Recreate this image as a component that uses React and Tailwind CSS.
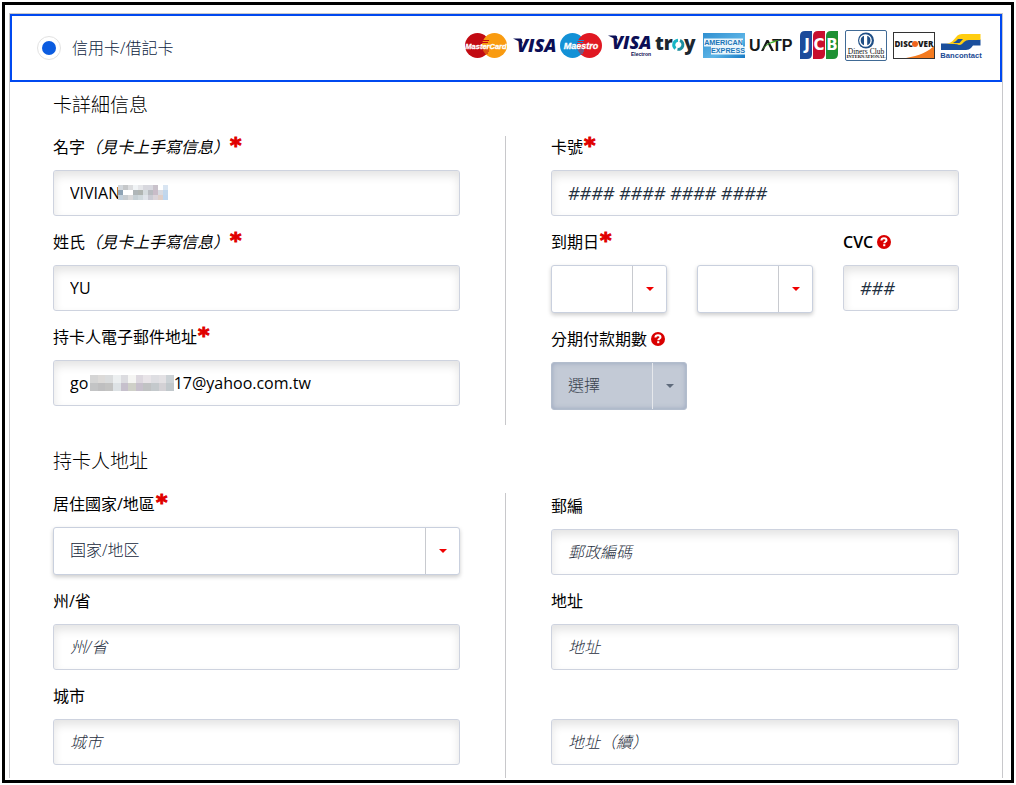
import { useId } from 'react'

const inputClass =
  'block w-full h-[46px] px-4 rounded-[3px] border border-[#ced3df] bg-white text-black placeholder:italic placeholder:text-[#1f2f40] shadow-[inset_0_5px_10px_rgba(0,0,0,0.11)] outline-none'

const Required = () => (
  <span className="ml-px self-start font-['DejaVu_Sans',sans-serif] text-[22px] leading-5 font-bold text-[#e00000] [-webkit-text-stroke:1px_#e00000]">*</span>
)

const Help = () => (
  <button type="button" aria-label="?" className="ml-1 flex items-center">
    <svg viewBox="0 0 14 14" className="w-3.5 h-3.5">
      <circle cx="7" cy="7" r="7" fill="#d90000" />
      <path d="M4.4 5.5c.1-1.500 1.100-2.200 2.600-2.200 1.500 0 2.500.8 2.500 1.900 0 1.600-2.200 1.500-2.200 3.100" fill="none" stroke="#fff" strokeWidth="2" />
      <rect x="6.2" y="9.200" width="2.100" height="2" fill="#fff" />
    </svg>
  </button>
)

const Field = ({ id, label, note, required, help, strong, children }) => (
  <div>
    <div className="flex items-center h-[22px] mb-3">
      <label htmlFor={id} className={`flex text-base leading-[22px] text-black whitespace-nowrap ${strong ? 'font-semibold' : 'font-normal'}`}>
        <span>{label}{note && <i>{note}</i>}</span>
        {required && <Required />}
      </label>
      {help && <Help />}
    </div>
    {children}
  </div>
)

const TextField = ({ label, note, required, help, strong, overlay, digits, ...props }) => {
  const id = useId()
  return (
    <Field id={id} label={label} note={note} required={required} help={help} strong={strong}>
      <div className="relative">
        <input id={id} className={`${inputClass} ${digits ? 'text-lg' : 'text-base placeholder:font-light'}`} {...props} />
        {overlay}
      </div>
    </Field>
  )
}

const Select = ({ id, disabled, option, ...props }) => (
  <div className="relative">
    <select
      id={id}
      disabled={disabled}
      className="block w-full h-12 pl-4 pr-9 pb-0.5 appearance-none rounded-[3px] border border-[#c9d0de] bg-white text-base font-light text-[#14263a] shadow-[0_2px_4px_rgba(0,0,0,0.2)] outline-none disabled:bg-[#c3cad6] disabled:border-[#b3bdcd] disabled:text-[#3a4450] disabled:opacity-100 disabled:shadow-[inset_0_0_5px_rgba(110,130,165,0.5)]"
      {...props}
    >
      <option>{option}</option>
    </select>
    <span className={`pointer-events-none absolute inset-y-px right-px w-[34px] flex items-center justify-center border-l ${disabled ? 'border-[#e6e8ec] text-[#5f6b7c]' : 'border-[#c8cacf] text-[#f00000]'}`}>
      <svg viewBox="0 0 8 4" className="w-2 h-1" fill="currentColor"><path d="M0 0h8L4 4z" /></svg>
    </span>
  </div>
)

const SelectField = ({ label, required, help, disabled, option }) => {
  const id = useId()
  return (
    <Field id={id} label={label} required={required} help={help}>
      <Select id={id} disabled={disabled} option={option} />
    </Field>
  )
}

const Mosaic = ({ rows, cell, height, className }) => (
  <svg className={className} viewBox={`0 0 ${rows[0].length * cell} ${rows.length * height}`} preserveAspectRatio="none" shapeRendering="crispEdges">
    {rows.map((row, y) => row.map((fill, x) => (
      <rect key={`${x}-${y}`} x={x * cell} y={y * height} width={cell} height={height} fill={fill} />
    )))}
  </svg>
)

const nameMosaic = [
  ['#d3d8dd', '#c5c7c9', '#dcdddf', '#f1f4f6', '#e6e7ea', '#d8d8de', '#d8d8df', '#c9c2cb', '#ffffff', '#d9e5f2'],
  ['#8ea3b5', '#ffffff', '#ffffff', '#afb6b8', '#b0b5b2', '#d5dbde', '#b9bcc1', '#c9bcc8', '#d9dbe2', '#c2d7ec'],
  ['#c2d0dc', '#c7ccd0', '#d9d9da', '#c6d0d5', '#d0d9dd', '#e0e4ea', '#cbcbd4', '#dbd4da', '#dfcfc9', '#bed6ef'],
]

const mailMosaic = [
  ['#d5d5d5', '#dcdad8', '#dadcdd', '#eceff0', '#dcdce0', '#f5f5f3', '#ddd8df', '#e8e4e8', '#dedee2', '#e3e1e4', '#ccd2d6'],
  ['#c3c4c5', '#bfbfc0', '#c3c3c2', '#dde2e5', '#c6c0cc', '#cfd0c8', '#c7c0cc', '#c0c2c3', '#c4c9cc', '#d3d1d5', '#c1c8cc'],
]

const Logo = ({ label, children }) => (
  <svg role="img" aria-label={label} viewBox="0 0 42 38" className="w-[42px] h-[38px] shrink-0 overflow-visible">
    {children}
  </svg>
)

const sans = 'Liberation Sans, sans-serif'
const heavy = 'Open Sans, sans-serif'

const Circles = ({ left, right, text, size }) => (
  <>
    <circle cx="12.5" cy="16.500" r="12.5" fill={left} />
    <circle cx="29.5" cy="16.500" r="12.5" fill={right} />
    <path d="M17 11.500h7M17 13.500h6M17 20h7M18 22h6M19 24h4" stroke={left} strokeWidth="1" />
    <text x="21" y="20" textAnchor="middle" fontFamily={sans} fontSize={size} fontWeight="700" fontStyle="italic" fill="#fff" stroke="#fff" strokeWidth="0.3">{text}</text>
  </>
)

const Logos = () => (
  <div className="flex justify-between w-[517px]">
    <Logo label="MasterCard"><Circles left="#c20a12" right="#f99b10" text="MasterCard" size="7.500" /></Logo>
    <Logo label="Visa">
      <text x="4" y="23" fontFamily={heavy} fontSize="18" fontWeight="800" fontStyle="italic" fill="#0b0e55">VISA</text>
      <path d="M0 9.500h8l2 5z" fill="#0b0e55" />
    </Logo>
    <Logo label="Maestro"><Circles left="#1391d6" right="#e01822" text="Maestro" size="9" /></Logo>
    <Logo label="Visa Electron">
      <text x="4" y="20" fontFamily={heavy} fontSize="18" fontWeight="800" fontStyle="italic" fill="#0b0e55">
        VISA
        <tspan x="23" y="27" fontFamily={sans} fontSize="5" fontStyle="normal" fontWeight="700">Electron</tspan>
      </text>
      <path d="M0 6.500h8l2 5z" fill="#0b0e55" />
    </Logo>
    <Logo label="Troy">
      <text y="21" fontFamily={heavy} fontSize="19" fontWeight="800" fill="#1c2730">
        <tspan x="0">tr</tspan><tspan x="29">y</tspan>
      </text>
      <path d="M23 11.300a4.600 4.600 0 0 0-2.500 8.200" fill="none" stroke="#16b5c4" strokeWidth="3" />
      <path d="M25 11.500a4.600 4.600 0 0 1-2.500 8.800" fill="none" stroke="#1c8fa0" strokeWidth="3" />
    </Logo>
    <Logo label="American Express">
      <defs>
        <linearGradient id="amex" x1="0" y1="0" x2="1" y2="1">
          <stop offset="0" stopColor="#2f8fd0" />
          <stop offset="0.6" stopColor="#5cb4e6" />
          <stop offset="1" stopColor="#1478c4" />
        </linearGradient>
      </defs>
      <rect y="4" width="42" height="25" fill="url(#amex)" />
      <path d="M1 9.500h39v8H1zM8 17.500h34v8H8z" fill="#e9f5fc" />
      <text textAnchor="middle" fontFamily={sans} fontSize="7.200" fontWeight="700" fill="#1b75b8">
        <tspan x="20.500" y="16.200">AMERICAN</tspan><tspan x="25" y="24.200">EXPRESS</tspan>
      </text>
    </Logo>
    <Logo label="UATP">
      <text y="22" fontFamily={sans} fontSize="16" fontWeight="700" fill="#15181a">
        <tspan x="-1">U</tspan><tspan x="22">TP</tspan>
      </text>
      <path d="M11 22l5.500-11h2L24 22h-2.600L17.400 14l-4 8z" fill="#15181a" />
      <path d="M12 21c3-5 8-9 18-10.500l-6 3c-5 1-9 4-12 7.500z" fill="#3fae29" />
    </Logo>
    <Logo label="JCB">
      <path d="M2 7q0-5 5-5h7v23q0 5-5 5H2z" fill="#1d4b9b" />
      <path d="M15 7q0-5 5-5h7v23q0 5-5 5h-7z" fill="#c8102e" />
      <path d="M28 7q0-5 5-5h7v23q0 5-5 5h-7z" fill="#1e9133" />
      <text y="21" textAnchor="middle" fontFamily="DejaVu Sans, sans-serif" fontSize="15" fontWeight="700" fill="#fff">
        <tspan x="9">J</tspan><tspan x="21">C</tspan><tspan x="34">B</tspan>
      </text>
    </Logo>
    <Logo label="Diners Club International">
      <rect x="0.500" y="1.500" width="41" height="30" rx="1.500" fill="#fff" stroke="#406a95" />
      <circle cx="21" cy="11.500" r="8" fill="#1f4f86" />
      <circle cx="20.500" cy="11.500" r="6.300" fill="#fff" />
      <path d="M19 6.800v9.400a5 5 0 0 1 0-9.400zM22.200 6.800v9.400a5 5 0 0 0 0-9.400z" fill="#1f4f86" />
      <text textAnchor="middle" fontFamily="Liberation Serif, serif" fill="#111">
        <tspan x="21" y="24.500" fontSize="7.500">Diners Club</tspan>
        <tspan x="21" y="29" fontSize="4.600" fontWeight="700">INTERNATIONAL</tspan>
      </text>
    </Logo>
    <Logo label="Discover">
      <rect x="0.500" y="3.500" width="41" height="26" fill="#fff" stroke="#333" />
      <path d="M13 29C26 27 36 22 41 17v12z" fill="#f47b20" />
      <text y="18" fontFamily={heavy} fontSize="8" fontWeight="800" fill="#1a1a1a">
        <tspan x="1.500">DISC</tspan><tspan x="25">VER</tspan>
      </text>
      <circle cx="22" cy="15" r="3" fill="#f0651e" />
    </Logo>
    <Logo label="Bancontact">
      <path d="M1 14.500h19l6-4h14.500v6H33l-2 2.500q-2 2-5 2H1z" fill="#1b4f9c" />
      <path d="M6 14.500q5 0 8-4l3.500-4Q19 5 22 5h18.500v6H29q-3 0-5 2l-2 2q-1 1-3 1-3-1.500-13-1.500z" fill="#ffcd10" />
      <path d="M13 14q3-1.500 5-4h5l-3.500 4z" fill="#1b4f9c" />
      <text x="21" y="28.500" textAnchor="middle" fontFamily={sans} fontSize="7.600" fontWeight="700" fill="#1b4a94">Bancontact</text>
    </Logo>
  </div>
)

const Heading = ({ children, className }) => (
  <h2 className={`text-[19px] leading-7 font-light text-black ${className}`}>{children}</h2>
)

const Left = ({ children, className }) => (
  <div className={`flex flex-col gap-[15px] pr-[45px] border-r border-[#c8c8cb] ${className}`}>{children}</div>
)

const Right = ({ children, className }) => (
  <div className={`flex flex-col justify-end gap-[15px] pl-[45px] ${className}`}>{children}</div>
)

const ExpiryFields = () => {
  const id = useId()
  return (
    <div className="grid grid-cols-3 gap-x-[30px]">
      <div className="col-span-2">
        <Field id={id} label="到期日" required>
          <div className="grid grid-cols-2 gap-x-[30px]">
            <Select id={id} option="" />
            <Select aria-label="到期日" option="" />
          </div>
        </Field>
      </div>
      <TextField label="CVC" help strong digits placeholder="###" />
    </div>
  )
}

const App = () => (
  <div lang="zh-TW" className="min-h-screen p-0.5 bg-white font-['Open_Sans','Noto_Sans_CJK_TC',sans-serif]">
    <main className="border-[3px] border-black pt-2 pr-2 pb-0.5 pl-1">
      <form className="border border-b-0 border-[#c8c8cb]">
        <header className="flex items-center justify-between h-[68px] pl-[25px] pr-[18px] border-2 border-[#0049f0]">
          <label className="flex items-center gap-[11px] text-base font-light text-[#0c2440] whitespace-nowrap">
            <input
              type="radio"
              name="method"
              defaultChecked
              className="appearance-none flex items-center justify-center w-6 h-6 rounded-full border border-[#e2e2e2] bg-white checked:before:content-[''] checked:before:w-3.5 checked:before:h-3.5 checked:before:rounded-full checked:before:bg-[#0b5ce0]"
            />
            <span>信用卡/借記卡</span>
          </label>
          <Logos />
        </header>

        <div className="px-[43px] pt-[9px]">
          <Heading className="mb-[17px]">卡詳細信息</Heading>
          <div className="grid grid-cols-2">
            <Left className="pb-[15px]">
              <TextField
                label="名字"
                note="（見卡上手寫信息）"
                required
                defaultValue="VIVIAN"
                overlay={<Mosaic rows={nameMosaic} cell={5} height={5} className="absolute left-[65px] top-[15px] w-[50px] h-[15px]" />}
              />
              <TextField label="姓氏" note="（見卡上手寫信息）" required defaultValue="YU" />
              <TextField
                label="持卡人電子郵件地址"
                required
                defaultValue={'go\u2003\u2003\u2003\u2003\u2003\u200417@yahoo.com.tw'}
                overlay={<Mosaic rows={mailMosaic} cell={8} height={8} className="absolute left-[37px] top-[15px] w-[84px] h-4" />}
              />
            </Left>
            <Right className="pb-[15px]">
              <TextField label="卡號" required digits placeholder="#### #### #### ####" />
              <ExpiryFields />
              <div className="w-[136px]">
                <SelectField label="分期付款期數" help disabled option="選擇" />
              </div>
            </Right>
          </div>

          <Heading className="mt-[22px] mb-[18px]">持卡人地址</Heading>
          <div className="grid grid-cols-2">
            <Left className="pb-[13px]">
              <SelectField label="居住國家/地區" required option="国家/地区" />
              <TextField label="州/省" placeholder="州/省" />
              <TextField label="城市" placeholder="城市" />
            </Left>
            <Right className="pb-[13px]">
              <TextField label="郵編" placeholder="郵政編碼" />
              <TextField label="地址" placeholder="地址" />
              <TextField aria-label="地址（續）" placeholder="地址（續）" />
            </Right>
          </div>
        </div>
      </form>
    </main>
  </div>
)

export default App
